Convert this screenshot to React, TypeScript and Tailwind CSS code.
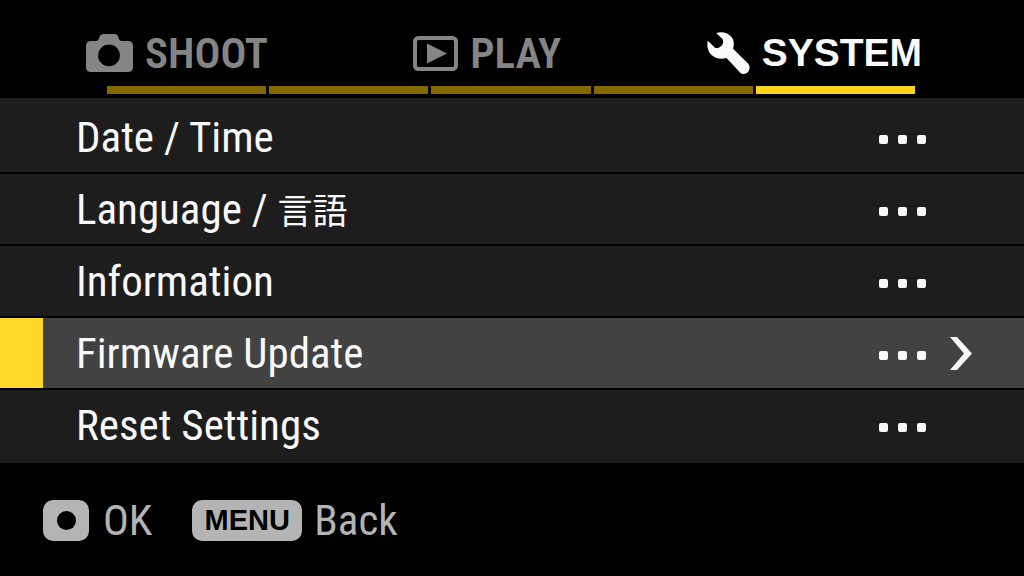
import React from "react";

type Tab = { label: string; icon: React.ReactNode };

function CameraIcon() {
  return (
    <svg className="h-[39px] w-[47px]" viewBox="0 0 47 39" aria-hidden="true">
      <path
        fill="currentColor"
        fillRule="evenodd"
        d="M5 7H10Q12 7 12.700 5.200L13.600 2.800Q14.500 0 17.500 0H28.500Q31.500 0 32.300 2.800L33 5.200Q33.700 7 35.500 7H42Q47 7 47 12V33Q47 38 42 38H5Q0 38 0 33V12Q0 7 5 7ZM23 10.500A10.900 10.900 0 1 0 23 32.300A10.900 10.900 0 1 0 23 10.500Z"
      />
    </svg>
  );
}

function PlayIcon() {
  return (
    <svg className="h-[35px] w-[45px]" viewBox="0 0 45 35" aria-hidden="true">
      <rect x="2" y="2" width="41" height="31" rx="3.5" fill="none" stroke="currentColor" strokeWidth="4" />
      <path d="M14 7.5L34 17.5L14 27.5Z" fill="currentColor" />
    </svg>
  );
}

function WrenchIcon() {
  return (
    <svg className="h-[43px] w-[43px]" viewBox="0 0 43 43" aria-hidden="true">
      <path
        fill="currentColor"
        d="M9.200 1C14.500 -.8 21.500 .6 24.900 5.500C27.200 8.800 27.300 13 26 16.800L41 31.400C43.300 33.800 43 37.700 41 40C38.800 42.500 35.200 42.600 33 40.400L19.500 26C13.500 27.600 8 26.500 4 22.500C.8 19.200 -.5 13.200 .8 8.800L8 15.800C11 16.800 15.300 14.500 16 11C16.400 9.200 16 8 15.300 6.800Z"
      />
    </svg>
  );
}

const tabs: Tab[] = [
  { label: "SHOOT", icon: <CameraIcon /> },
  { label: "PLAY", icon: <PlayIcon /> },
  { label: "SYSTEM", icon: <WrenchIcon /> },
];

const items = ["Date / Time", "Language / 言語", "Information", "Firmware Update", "Reset Settings"];

function Dots() {
  return (
    <span className="flex gap-[10px] pt-1" aria-hidden="true">
      <span className="size-[9px] rounded-[2px] bg-[#f8f8f8]" />
      <span className="size-[9px] rounded-[2px] bg-[#f8f8f8]" />
      <span className="size-[9px] rounded-[2px] bg-[#f8f8f8]" />
    </span>
  );
}

function ItemLabel({ text }: { text: string }) {
  const parts = text.split("言語");
  return (
    <span className="flex-1 text-left">
      {parts[0]}
      {parts.length > 1 && <span className="font-['Noto_Sans_CJK_JP',sans-serif] text-[35px] leading-none">言語</span>}
    </span>
  );
}

export default function App() {
  return (
    <main className="min-h-screen bg-black font-['Roboto_Condensed','Roboto','Noto_Sans_CJK_JP',sans-serif] text-[#f8f8f8]">
      <header className="pt-7 pb-1">
        <nav className="flex h-[50px] items-center justify-between pr-[102px] pl-[86px] text-[43px] leading-[50px] font-semibold">
          {tabs.map((tab) => (
            <button
              key={tab.label}
              type="button"
              aria-current={tab.label === "SYSTEM" ? "page" : undefined}
              className="flex items-center gap-3 text-[#858585] aria-[current=page]:font-['Liberation_Sans',sans-serif] aria-[current=page]:text-[39px] aria-[current=page]:font-bold aria-[current=page]:text-[#fafafa]"
            >
              {tab.icon}
              {tab.label}
            </button>
          ))}
        </nav>
        <div className="mt-2 mr-[109px] ml-[107px] grid grid-cols-5 gap-[3px]">
          <span className="h-2 bg-[#846800]" />
          <span className="h-2 bg-[#846800]" />
          <span className="h-2 bg-[#846800]" />
          <span className="h-2 bg-[#846800]" />
          <span className="h-2 bg-[#fcd31d]" />
        </div>
      </header>

      <ul className="bg-[#1d1d1d] pt-1 pb-px">
        {items.map((item) => {
          const selected = item === "Firmware Update";
          return (
            <li key={item} className="border-b-2 border-black last:border-transparent">
              <button
                type="button"
                className={
                  selected
                    ? "flex h-[70px] w-full items-center bg-[#424242] text-[43px] leading-[54px]"
                    : "flex h-[70px] w-full items-center text-[43px] leading-[54px]"
                }
              >
                <span className={selected ? "mr-[33px] w-[43px] self-stretch bg-[#ffd828]" : "mr-[33px] w-[43px]"} />
                <ItemLabel text={item} />
                <Dots />
                <span className="ml-6 w-[74px]">
                  {selected && (
                    <svg className="h-[33px] w-[22px]" viewBox="0 0 22 33" aria-hidden="true">
                      <path d="M0 0H7L22 16.500L7 33H0L14 16.500Z" fill="currentColor" />
                    </svg>
                  )}
                </span>
              </button>
            </li>
          );
        })}
      </ul>

      <footer className="flex items-center gap-10 pt-8 pl-[43px] text-[43px] leading-[50px] text-[#b4b4b4]">
        <button type="button" className="flex items-center gap-[14px]">
          <span className="flex h-[41px] w-[46px] items-center justify-center rounded-[10px] bg-[#b4b4b4]">
            <span className="size-[19px] rounded-full bg-black" />
          </span>
          OK
        </button>
        <button type="button" className="flex items-center gap-3">
          <span className="flex h-[41px] w-[110px] items-center justify-center rounded-[10px] bg-[#b4b4b4] font-['Liberation_Sans',sans-serif] text-[29px] font-bold text-black">
            MENU
          </span>
          Back
        </button>
      </footer>
    </main>
  );
}
